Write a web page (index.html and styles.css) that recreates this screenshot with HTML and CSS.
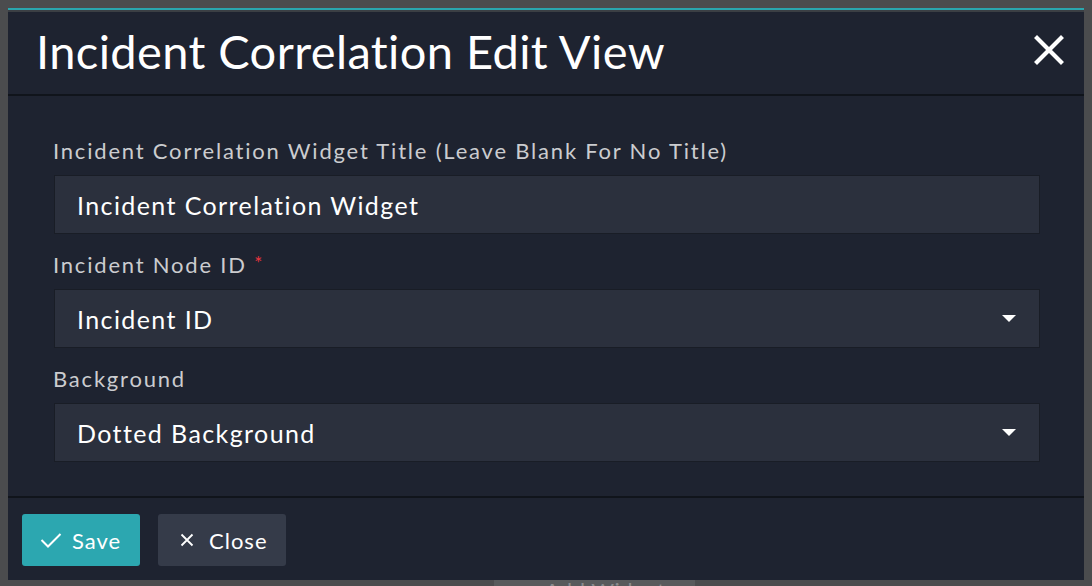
FILE: index.html
```html
<!DOCTYPE html>
<html>
<head>
<meta charset="utf-8">
<link rel="stylesheet" href="styles.css">
</head>
<body>
<div class="backdrop-btn"><span class="plus">+</span> Add Widget</div>
<div class="modal">
  <div class="modal-header">
    <h1 class="modal-title">Incident Correlation Edit View</h1>
    <button class="close-x" aria-label="Close">
      <svg width="30" height="30" viewBox="0 0 30 30"><path d="M3 3 L27 27 M27 3 L3 27" stroke="#fff" stroke-width="4.2" stroke-linecap="square"/></svg>
    </button>
  </div>
  <div class="modal-body">
    <div class="field">
      <label class="label">Incident Correlation Widget Title (Leave Blank For No Title)</label>
      <div class="input">Incident Correlation Widget</div>
    </div>
    <div class="field">
      <label class="label">Incident Node ID <span class="req">*</span></label>
      <div class="input select">Incident ID<span class="caret"></span></div>
    </div>
    <div class="field">
      <label class="label">Background</label>
      <div class="input select">Dotted Background<span class="caret"></span></div>
    </div>
  </div>
  <div class="modal-footer">
    <button class="btn btn-save">
      <svg width="22" height="16" viewBox="0 0 22 16"><path d="M1.5 8 L8 14.5 L20.5 2" fill="none" stroke="#fff" stroke-width="2"/></svg>
      Save
    </button>
    <button class="btn btn-close">
      <svg width="14" height="14" viewBox="0 0 14 14"><path d="M1.5 1.5 L12.5 12.5 M12.5 1.5 L1.5 12.5" stroke="#fff" stroke-width="1.8"/></svg>
      Close
    </button>
  </div>
</div>
</body>
</html>
```
FILE: styles.css
```css
html, body {
  margin: 0;
  padding: 0;
}
body {
  background: #4b4c4e;
  width: 1092px;
  height: 586px;
  overflow: hidden;
  position: relative;
  font-family: Lato, "Open Sans", sans-serif;
  padding: 8px 0 0 8px;
  box-sizing: border-box;
}
.backdrop-btn {
  position: absolute;
  left: 494px;
  top: 580px;
  width: 201px;
  height: 6px;
  overflow: hidden;
  background: #585a5c;
  color: #8a8b8d;
  font-size: 22px;
  line-height: 20px;
  padding: 1px 0 0 22px;
  box-sizing: border-box;
  letter-spacing: 0.5px;
}
.backdrop-btn .plus {
  margin-right: 10px;
}
.modal {
  position: relative;
  width: 1076px;
  height: 572px;
  background: #1e2330;
  border-top: 2px solid #2aa6ae;
  box-sizing: border-box;
  display: flex;
  flex-direction: column;
}
.modal::before {
  content: "";
  display: block;
  height: 2px;
  background: #3b3f44;
}
.modal-header {
  height: 82px;
  display: flex;
  align-items: center;
  justify-content: space-between;
  padding: 0 20px 0 28px;
  border-bottom: 2px solid #10141b;
}
.modal-title {
  margin: 0;
  font-size: 47px;
  font-weight: 400;
  color: #fff;
  letter-spacing: 0.4px;
  line-height: 56px;
  padding-bottom: 5px;
}
.close-x {
  background: none;
  border: 0;
  padding: 0;
  width: 30px;
  height: 30px;
  display: flex;
  margin-top: -6px;
}
.modal-body {
  flex: 1;
  padding: 43px 45px 0 45px;
  display: flex;
  flex-direction: column;
  gap: 19px;
}
.field {
  display: flex;
  flex-direction: column;
  gap: 12px;
}
.label {
  font-size: 22px;
  color: #cbcccf;
  letter-spacing: 1.8px;
  line-height: 24px;
}
.req {
  color: #e8353f;
  font-size: 19px;
  vertical-align: top;
  letter-spacing: 0;
  line-height: 20px;
}
.input {
  height: 59px;
  background: #2b303d;
  border: 1px solid #191d26;
  box-sizing: border-box;
  margin: 0 0 0 1px;
  width: 986px;
  color: #fff;
  font-size: 25px;
  letter-spacing: 1.4px;
  display: flex;
  align-items: center;
  padding: 0 22px;
  position: relative;
}
.select {
  justify-content: space-between;
}
.caret {
  width: 0;
  height: 0;
  border-left: 7px solid transparent;
  border-right: 7px solid transparent;
  border-top: 7px solid #fff;
  margin-right: 1px;
}
.modal-footer {
  height: 82px;
  border-top: 2px solid #10141b;
  display: flex;
  align-items: center;
  gap: 18px;
  padding: 0 14px;
}
.btn {
  height: 52px;
  border: 0;
  border-radius: 3px;
  color: #fff;
  font-family: Lato, "Open Sans", sans-serif;
  font-size: 22px;
  letter-spacing: 1px;
  display: flex;
  align-items: center;
  box-sizing: border-box;
  margin-top: 2px;
}
.btn-save {
  background: #2ca7b0;
  width: 118px;
  padding: 0 0 0 18px;
  gap: 10px;
}
.btn-close {
  background: #353b49;
  width: 128px;
  padding: 0 0 0 22px;
  gap: 15px;
}
```
